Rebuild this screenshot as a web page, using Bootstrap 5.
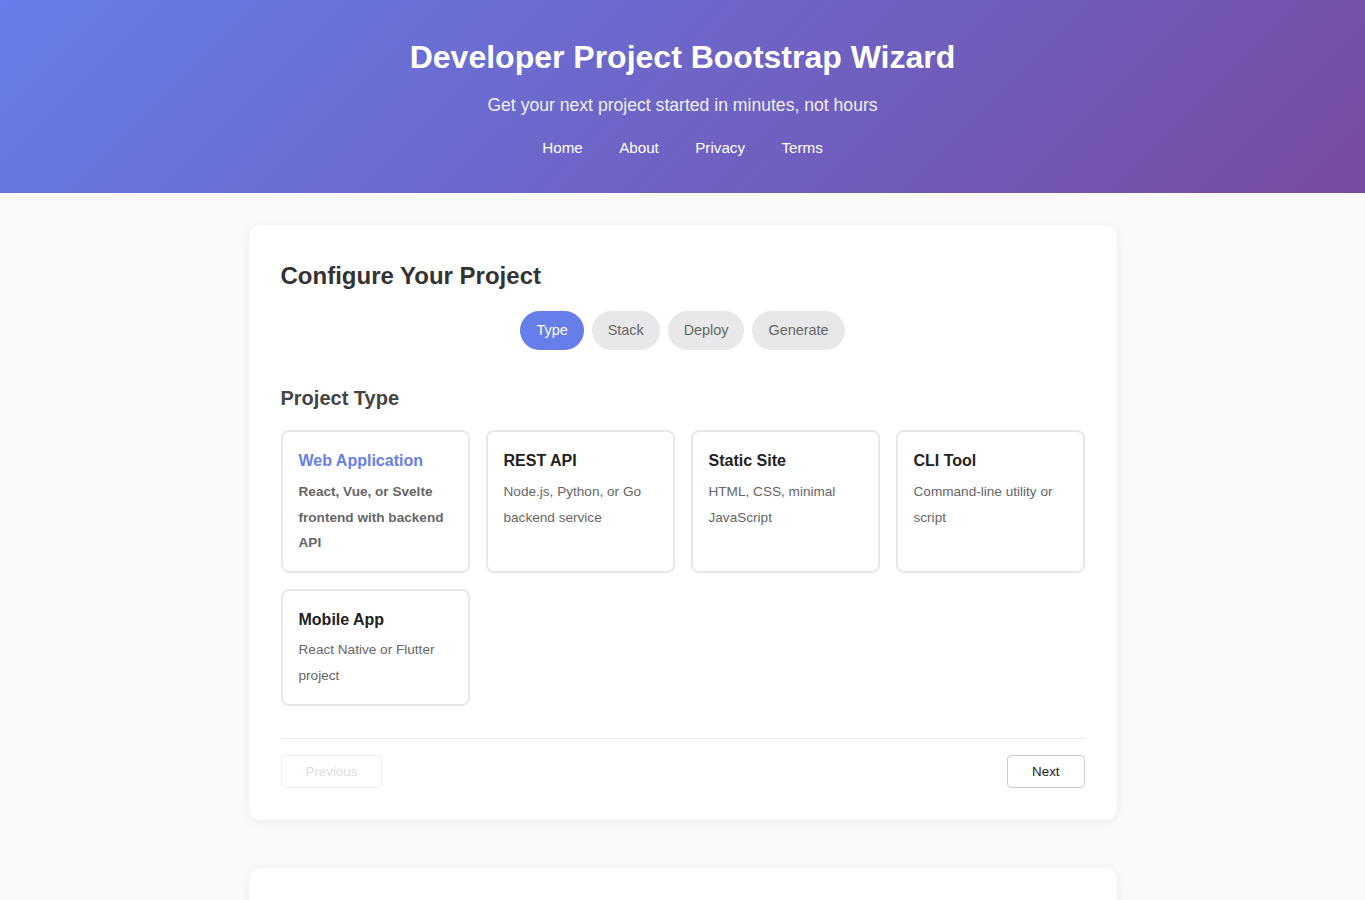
<!DOCTYPE html>
<html lang="en">
<head>
    <meta charset="UTF-8">
    <meta name="viewport" content="width=device-width, initial-scale=1.0">
    <title>Developer Project Bootstrap Wizard</title>
    <link href="https://cdn.jsdelivr.net/npm/bootstrap@5.3.3/dist/css/bootstrap.min.css" rel="stylesheet">
    <script src="https://cdn.jsdelivr.net/npm/bootstrap@5.3.3/dist/js/bootstrap.bundle.min.js"></script>
    <style>
        body {
            font-family: "Liberation Sans", Arial, sans-serif;
            background-color: #fafafa;
            color: #333;
            line-height: 1.6;
        }
        .site-header {
            background: linear-gradient(135deg, #667eea 0%, #764ba2 100%);
            color: #fff;
            padding: 32px 16px;
            height: 193px;
        }
        .site-header h1 {
            font-size: 32px;
            font-weight: 700;
            line-height: 1.6;
            margin-bottom: 8px;
        }
        .site-sub {
            font-size: 17.6px;
            opacity: .9;
            margin-bottom: 17px;
        }
        .site-nav {
            gap: 36.4px;
        }
        .site-nav a {
            color: #fff;
            font-size: 15.2px;
            text-decoration: none;
        }
        .page-wrap {
            max-width: 900px;
            margin: 0 auto;
            padding: 32px 16px;
        }
        .wizard-card {
            background: #fff;
            border-radius: 12px;
            box-shadow: 0 2px 12px rgba(0,0,0,.06);
            padding: 32px;
            margin-bottom: 48px;
        }
        .wizard-card h2 {
            font-size: 24px;
            font-weight: 700;
            color: #333;
            line-height: 1.6;
            margin-bottom: 16px;
        }
        .step-pill {
            background: #e8e8ea;
            color: #666;
            font-size: 14.4px;
            padding: 8px 16px;
            border-radius: 20px;
            border: 0;
        }
        .step-pill.on {
            background: #667eea;
            color: #fff;
        }
        .step-title {
            font-size: 20px;
            font-weight: 700;
            color: #444;
            line-height: 1.6;
            margin-top: 32px;
            margin-bottom: 16px;
        }
        .type-grid {
            display: grid;
            grid-template-columns: repeat(4, 1fr);
            gap: 16px;
        }
        .type-opt {
            border: 2px solid #e8e8e8;
            border-radius: 8px;
            padding: 16px 16px 15px;
            background: #fff;
        }
        .type-opt h3 {
            font-size: 16px;
            font-weight: 700;
            color: #222;
            line-height: 1.6;
            margin-bottom: 5px;
        }
        .type-opt p {
            font-size: 13.6px;
            color: #666;
            line-height: 25.6px;
            margin: 0;
        }
        .type-opt.on h3 {
            color: #667eea;
        }
        .type-opt.on p {
            font-weight: 700;
        }
        .wizard-foot {
            border-top: 1px solid #e8e8e8;
            margin-top: 32px;
            padding-top: 16px;
        }
        .foot-btn {
            background: #fff;
            color: #222;
            border: 1px solid #ccc;
            border-radius: 4px;
            font-size: 13.33px;
            padding: 8px 24px;
            line-height: 15px;
        }
        .foot-btn:disabled {
            border-color: #eee;
            color: #ddd;
        }
        .second-card {
            min-height: 300px;
        }
    </style>
</head>
<body>
<header class="site-header text-center">
    <h1>Developer Project Bootstrap Wizard</h1>
    <p class="site-sub">Get your next project started in minutes, not hours</p>
    <nav class="site-nav d-flex justify-content-center">
        <a href="#">Home</a>
        <a href="#">About</a>
        <a href="#">Privacy</a>
        <a href="#">Terms</a>
    </nav>
</header>
<main class="page-wrap">
    <section class="wizard-card">
        <h2>Configure Your Project</h2>
        <div class="d-flex justify-content-center gap-2">
            <button type="button" class="step-pill on">Type</button>
            <button type="button" class="step-pill">Stack</button>
            <button type="button" class="step-pill">Deploy</button>
            <button type="button" class="step-pill">Generate</button>
        </div>
        <h3 class="step-title">Project Type</h3>
        <div class="type-grid">
            <div class="type-opt on">
                <h3>Web Application</h3>
                <p>React, Vue, or Svelte frontend with backend API</p>
            </div>
            <div class="type-opt">
                <h3>REST API</h3>
                <p>Node.js, Python, or Go backend service</p>
            </div>
            <div class="type-opt">
                <h3>Static Site</h3>
                <p>HTML, CSS, minimal JavaScript</p>
            </div>
            <div class="type-opt">
                <h3>CLI Tool</h3>
                <p>Command-line utility or script</p>
            </div>
            <div class="type-opt">
                <h3>Mobile App</h3>
                <p>React Native or Flutter project</p>
            </div>
        </div>
        <div class="wizard-foot d-flex justify-content-between">
            <button type="button" class="foot-btn" disabled>Previous</button>
            <button type="button" class="foot-btn">Next</button>
        </div>
    </section>
    <section class="wizard-card second-card"></section>
</main>
</body>
</html>
